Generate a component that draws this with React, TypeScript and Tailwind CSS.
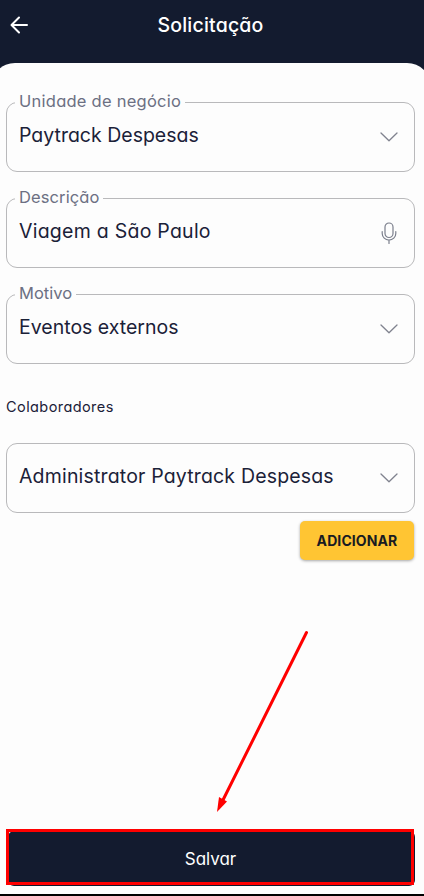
import type { ReactNode } from 'react';

interface FieldProps {
  label?: string;
  labelClass?: string;
  value: string;
  valueClass?: string;
  icon: ReactNode;
}

function ChevronIcon() {
  return (
    <svg width="18" height="10" viewBox="0 0 18 10" fill="none" stroke="#80838f" strokeWidth="1.3">
      <path d="M1 1 L9 8.8 L17 1" strokeLinejoin="round" strokeLinecap="round" />
    </svg>
  );
}

function MicIcon() {
  return (
    <svg
      className="mr-px"
      width="16"
      height="23"
      viewBox="0 0 16 23"
      fill="none"
      stroke="#7b7f8c"
      strokeWidth="1.2"
      strokeLinecap="round"
    >
      <rect x="4" y="1" width="8" height="14.5" rx="4" />
      <path d="M1.2 9.5 V11.5 A6.8 6.6 0 0 0 14.8 11.5 V9.5 M8 18.2 V21.5" />
    </svg>
  );
}

/** Outlined form field; the label, when given, sits in the border. */
function Field({ label, labelClass = '', value, valueClass = '', icon }: FieldProps) {
  return (
    <fieldset
      className={`rounded-[11px] border border-[#b9b9bb] ${label ? 'h-[80px]' : 'h-[70px]'}`}
    >
      {label && (
        <legend
          className={`ml-2 h-[21px] px-1 text-[16.5px] leading-[19px] whitespace-nowrap text-[#6c7083] ${labelClass}`}
        >
          {label}
        </legend>
      )}
      <div className={`flex items-center justify-between pr-4 pl-3 ${label ? 'h-[48px]' : 'h-[68px]'}`}>
        <span className={`pb-[5px] text-[19.5px] leading-6 whitespace-nowrap ${valueClass}`}>{value}</span>
        {icon}
      </div>
    </fieldset>
  );
}

export default function App() {
  return (
    <div className="relative flex h-[896px] w-[424px] flex-col overflow-hidden bg-[#131b2f] font-['Inter',sans-serif] text-[#1b2138] [font-feature-settings:'cv11']">
      <header className="grid h-[63px] shrink-0 grid-cols-[40px_1fr_40px] items-start pt-3">
        <svg
          className="mt-1 ml-[10px]"
          width="18"
          height="18"
          viewBox="0 0 18 18"
          fill="none"
          stroke="#fff"
          strokeWidth="2"
          strokeLinecap="round"
          strokeLinejoin="round"
        >
          <path d="M17 9 H2 M9 1.5 L1.5 9 L9 16.5" />
        </svg>
        <h1 className="pt-px pr-[3px] text-center text-[19.5px] leading-[25px] font-medium tracking-[0.2px] text-white">
          Solicitação
        </h1>
      </header>

      <main className="-mr-[7px] -ml-[9px] flex grow flex-col rounded-t-[24px] border-b-2 border-black bg-[#fdfdfd] pr-4 pl-[15px]">
        <div className="flex flex-col gap-4 pt-[29px]">
          <Field
            label="Unidade de negócio"
            labelClass="tracking-[0.25px]"
            value="Paytrack Despesas"
            icon={<ChevronIcon />}
          />
          <Field
            label="Descrição"
            labelClass="tracking-[0.1px]"
            value="Viagem a São Paulo"
            valueClass="tracking-[0.25px]"
            icon={<MicIcon />}
          />
          <Field label="Motivo" value="Eventos externos" icon={<ChevronIcon />} />
        </div>

        <h2 className="mt-[33px] text-[14.5px] leading-5 tracking-[0.42px]">Colaboradores</h2>
        <div className="mt-[26px]">
          <Field
            value="Administrator Paytrack Despesas"
            valueClass="tracking-[0.17px]"
            icon={<ChevronIcon />}
          />
        </div>
        <button className="mt-2 mr-px h-[39px] w-[114px] self-end rounded-[5px] bg-[#ffc533] text-[14px] font-bold tracking-[0.1px] text-[#191b22] shadow-[0_1px_3px_rgba(0,0,0,0.35)]">
          ADICIONAR
        </button>

        <button className="mt-auto mb-2 ml-0.5 h-[55px] rounded-[6px] bg-[#131b2f] pt-[3px] pr-0.5 text-[17px] text-white">
          Salvar
        </button>
      </main>

      {/* Callout pointing at the save button */}
      <div className="pointer-events-none absolute top-[829px] left-[6px] h-[56px] w-[408px] border-[3px] border-[#ff0000]" />
      <svg
        className="pointer-events-none absolute top-[620px] left-[190px]"
        width="140"
        height="200"
        viewBox="0 0 140 200"
      >
        <path d="M116.5 12.5 L32 182" stroke="#ff0000" strokeWidth="3" strokeLinecap="round" />
        <path d="M27 192 L29 177 L37 181.5 Z" fill="#ff0000" />
      </svg>
    </div>
  );
}
